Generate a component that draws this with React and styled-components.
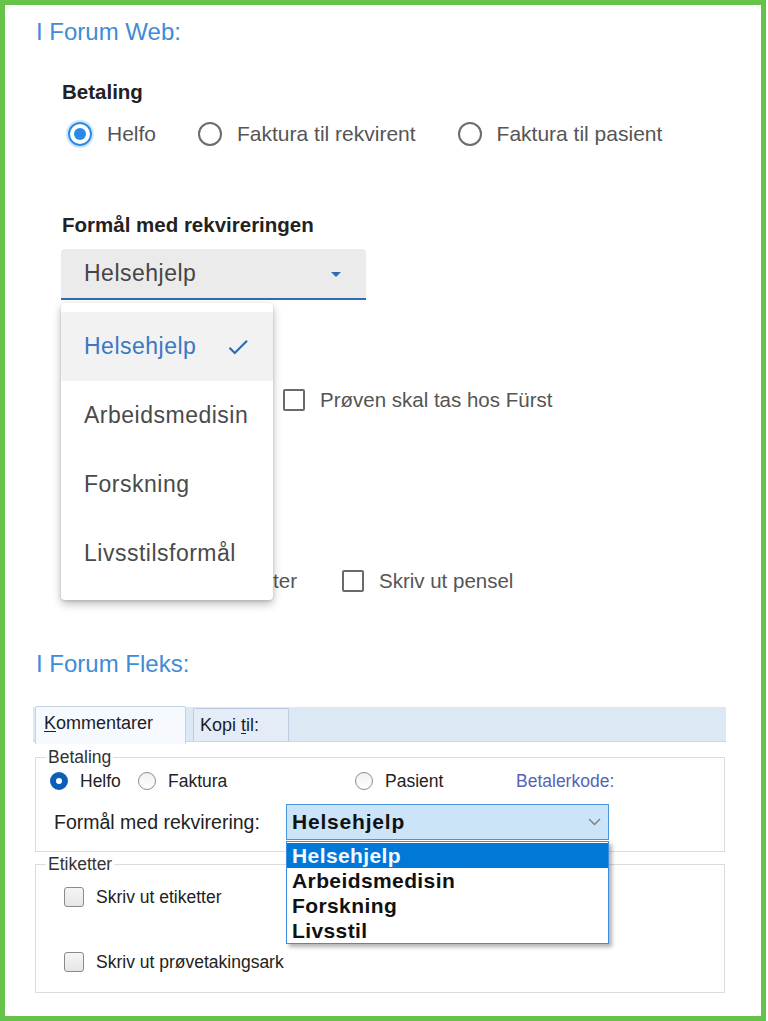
import React from 'react'
import styled, { createGlobalStyle } from 'styled-components'

const GlobalStyle = createGlobalStyle`
  html, body {
    margin: 0;
    padding: 0;
    background: #fff;
  }
  body {
    font-family: "Liberation Sans", Arial, sans-serif;
  }
`

const Frame = styled.div`
  box-sizing: border-box;
  width: 766px;
  height: 1021px;
  border: 5px solid #66c34a;
  background: #fff;
  overflow: hidden;
  padding: 12px 0 0 31px;
`

const Title = styled.h2`
  margin: ${p => p.$top || 0}px 0 0;
  font-size: 24px;
  line-height: 30px;
  font-weight: 400;
  color: #3f8bd8;
`

/* ---------- Forum Web ---------- */

const WebForm = styled.div`
  margin-left: 26px;
`

const FieldLabel = styled.div`
  margin-top: ${p => p.$top}px;
  font-size: 20.5px;
  line-height: 26px;
  font-weight: 700;
  color: #222;
`

const RadioRow = styled.div`
  margin-top: 15px;
  height: 28px;
  padding-left: 6px;
  display: flex;
  align-items: center;
  gap: 42px;
`

const RadioOption = styled.label`
  display: flex;
  align-items: center;
  gap: 15px;
  font-size: 21px;
  color: #555;
`

const RadioDot = styled.span`
  box-sizing: border-box;
  width: 24px;
  height: 24px;
  border-radius: 50%;
  border: 2px solid ${p => (p.$checked ? '#2a8be6' : '#6b6b6b')};
  display: grid;
  place-items: center;
  box-shadow: ${p => (p.$checked ? '0 0 0 2px rgba(42,139,230,0.22)' : 'none')};
  &::after {
    content: '';
    width: 12px;
    height: 12px;
    border-radius: 50%;
    background: ${p => (p.$checked ? '#2a8be6' : 'transparent')};
  }
`

const SelectWrap = styled.div`
  position: relative;
  width: 305px;
  margin: 11px 0 0 -1px;
`

const SelectBox = styled.div`
  box-sizing: border-box;
  height: 51px;
  background: #ebebeb;
  border-radius: 4px 4px 0 0;
  border-bottom: 2px solid #2d6cb4;
  display: flex;
  align-items: center;
  justify-content: space-between;
  padding: 0 18px 0 23px;
  font-size: 23px;
  letter-spacing: 0.5px;
  color: #454545;
`

const Menu = styled.div`
  position: absolute;
  top: calc(100% + 3px);
  left: 0;
  width: 212px;
  background: #fff;
  border-radius: 4px;
  box-shadow: 0 4px 10px rgba(0, 0, 0, 0.26), 0 1px 3px rgba(0, 0, 0, 0.14);
  padding: 9px 0 12px;
  z-index: 5;
`

const MenuItem = styled.div`
  height: 69px;
  display: flex;
  align-items: center;
  justify-content: space-between;
  padding: 0 22px 0 23px;
  font-size: 23px;
  letter-spacing: 0.5px;
  color: ${p => (p.$active ? '#3a78c2' : '#4a4a4a')};
  background: ${p => (p.$active ? '#f2f2f2' : 'transparent')};
`

const CheckRow = styled.div`
  margin-top: ${p => p.$top}px;
  padding-left: ${p => p.$left}px;
  height: 22px;
  display: flex;
  align-items: center;
  gap: 45px;
`

const CheckOption = styled.label`
  display: flex;
  align-items: center;
  gap: 15px;
  font-size: 20.5px;
  color: #555;
`

const CheckSquare = styled.span`
  box-sizing: border-box;
  width: 22px;
  height: 22px;
  border: 2px solid #6a6a6a;
  border-radius: 2px;
`

/* ---------- Forum Fleks ---------- */

const Fleks = styled.div`
  width: 693px;
  margin: 28px 0 0 -3px;
`

const TabStrip = styled.div`
  box-sizing: border-box;
  height: 35px;
  background: #dde8f5;
  border-bottom: 1px solid #c8d5e6;
  display: flex;
  align-items: flex-end;
  gap: 7px;
  padding-left: 2px;
`

const Tab = styled.div`
  box-sizing: border-box;
  width: ${p => p.$width}px;
  height: ${p => (p.$active ? 38 : 33)}px;
  margin-bottom: ${p => (p.$active ? -3 : 0)}px;
  position: relative;
  z-index: ${p => (p.$active ? 2 : 1)};
  background: ${p => (p.$active ? '#f6f9fd' : '#e4ecf7')};
  border: 1px solid ${p => (p.$active ? '#c7d3e3' : '#bccbe0')};
  border-bottom: none;
  border-radius: 2px 2px 0 0;
  display: flex;
  align-items: center;
  padding: ${p => (p.$active ? '0 0 4px 8px' : '0 0 0 6px')};
  font-size: 18px;
  color: #1c1c2c;
  u {
    text-decoration-thickness: 1px;
    text-underline-offset: 2px;
  }
`

const Panel = styled.div`
  padding: 0 1px 0 2px;
`

const Group = styled.fieldset`
  margin: ${p => p.$top}px 0 0;
  padding: 0;
  border: 1px solid #dcdcdc;
  min-width: 0;
`

const Legend = styled.legend`
  margin-left: 10px;
  padding: 0 2px;
  font-size: 17.5px;
  line-height: 20px;
  color: #333;
`

const GroupBody = styled.div`
  padding: ${p => p.$pad};
`

const WinRadioRow = styled.div`
  height: 22px;
  display: flex;
  align-items: center;
`

const WinRadioOption = styled.label`
  width: ${p => p.$width}px;
  display: flex;
  align-items: center;
  gap: 12px;
  font-size: 17.5px;
  color: #222;
`

const WinRadio = styled.span`
  box-sizing: border-box;
  width: 18px;
  height: 18px;
  border-radius: 50%;
  border: ${p => (p.$checked ? '6px solid #0b5fb8' : '1.5px solid #8d8d8d')};
  background: ${p => (p.$checked ? '#fff' : 'linear-gradient(#f1f1f1, #fff)')};
`

const CodeLabel = styled.span`
  font-size: 17.5px;
  color: #5663b5;
`

const ComboRow = styled.div`
  margin: 12px 0 0 4px;
  display: flex;
  align-items: center;
`

const ComboLabel = styled.span`
  width: 232px;
  font-size: 19.5px;
  color: #222;
`

const ComboWrap = styled.div`
  position: relative;
  width: 323px;
`

const ComboBox = styled.div`
  box-sizing: border-box;
  height: 36px;
  border: 1px solid #4a95dc;
  background: #cce4f7;
  display: flex;
  align-items: center;
  justify-content: space-between;
  padding: 0 7px 0 5px;
  font-size: 21px;
  font-weight: 700;
  letter-spacing: 0.8px;
  color: #111;
`

const DropList = styled.div`
  box-sizing: border-box;
  position: absolute;
  top: calc(100% + 1px);
  left: 0;
  width: 323px;
  height: 103px;
  padding-top: 1px;
  background: #fff;
  border: 1px solid #3d8ee0;
  box-shadow: 3px 3px 4px rgba(0, 0, 0, 0.3);
  z-index: 5;
`

const DropItem = styled.div`
  height: 25px;
  line-height: 25px;
  padding-left: 5px;
  font-size: 21px;
  font-weight: 700;
  letter-spacing: 0.4px;
  color: ${p => (p.$selected ? '#f4f8ff' : '#111')};
  background: ${p => (p.$selected ? '#0078d7' : 'transparent')};
`

const WinCheckRow = styled.label`
  margin-top: ${p => p.$top}px;
  height: 20px;
  display: flex;
  align-items: center;
  gap: 12px;
  font-size: 17.5px;
  color: #222;
`

const WinCheck = styled.span`
  box-sizing: border-box;
  width: 20px;
  height: 20px;
  border: 1.5px solid #8a8a8a;
  border-radius: 3px;
  background: linear-gradient(#f5f5f5, #e6e6e6);
`

const CaretIcon = () => (
  <svg width="24" height="24" viewBox="0 0 24 24">
    <path d="M7 10l5 5 5-5z" fill="#2d6cb4" />
  </svg>
)

const CheckIcon = () => (
  <svg width="26" height="26" viewBox="0 0 24 24">
    <path d="M9 16.17L4.83 12l-1.42 1.41L9 19 21 7l-1.41-1.41z" fill="#2d6cb4" />
  </svg>
)

const ChevronIcon = () => (
  <svg width="13" height="8" viewBox="0 0 13 8">
    <path d="M1 1l5.5 5.5L12 1" fill="none" stroke="#7a7a7a" strokeWidth="1.3" />
  </svg>
)

const webOptions = ['Helsehjelp', 'Arbeidsmedisin', 'Forskning', 'Livsstilsformål']
const fleksOptions = ['Helsehjelp', 'Arbeidsmedisin', 'Forskning', 'Livsstil']

export default function App() {
  return (
    <>
      <GlobalStyle />
      <Frame>
        <Title>I Forum Web:</Title>
        <WebForm>
          <FieldLabel $top={32}>Betaling</FieldLabel>
          <RadioRow>
            <RadioOption>
              <RadioDot $checked />
              Helfo
            </RadioOption>
            <RadioOption>
              <RadioDot />
              Faktura til rekvirent
            </RadioOption>
            <RadioOption>
              <RadioDot />
              Faktura til pasient
            </RadioOption>
          </RadioRow>

          <FieldLabel $top={64}>Formål med rekvireringen</FieldLabel>
          <SelectWrap>
            <SelectBox>
              Helsehjelp
              <CaretIcon />
            </SelectBox>
            <Menu>
              {webOptions.map((o, i) => (
                <MenuItem key={o} $active={i === 0}>
                  {o}
                  {i === 0 && <CheckIcon />}
                </MenuItem>
              ))}
            </Menu>
          </SelectWrap>

          <CheckRow $top={89} $left={221}>
            <CheckOption>
              <CheckSquare />
              Prøven skal tas hos Fürst
            </CheckOption>
          </CheckRow>
          <CheckRow $top={159} $left={51}>
            <CheckOption>
              <CheckSquare />
              Skriv ut etiketter
            </CheckOption>
            <CheckOption>
              <CheckSquare />
              Skriv ut pensel
            </CheckOption>
          </CheckRow>
        </WebForm>

        <Title $top={57}>I Forum Fleks:</Title>
        <Fleks>
          <TabStrip>
            <Tab $active $width={151}>
              <span>
                <u>K</u>ommentarer
              </span>
            </Tab>
            <Tab $width={96}>
              <span>
                Kopi <u>t</u>il:
              </span>
            </Tab>
          </TabStrip>
          <Panel>
            <Group $top={5}>
              <Legend>Betaling</Legend>
              <GroupBody $pad="3px 0 11px 14px">
                <WinRadioRow>
                  <WinRadioOption $width={88}>
                    <WinRadio $checked />
                    Helfo
                  </WinRadioOption>
                  <WinRadioOption $width={217}>
                    <WinRadio />
                    Faktura
                  </WinRadioOption>
                  <WinRadioOption $width={161}>
                    <WinRadio />
                    Pasient
                  </WinRadioOption>
                  <CodeLabel>Betalerkode:</CodeLabel>
                </WinRadioRow>
                <ComboRow>
                  <ComboLabel>Formål med rekvirering:</ComboLabel>
                  <ComboWrap>
                    <ComboBox>
                      Helsehjelp
                      <ChevronIcon />
                    </ComboBox>
                    <DropList>
                      {fleksOptions.map((o, i) => (
                        <DropItem key={o} $selected={i === 0}>
                          {o}
                        </DropItem>
                      ))}
                    </DropList>
                  </ComboWrap>
                </ComboRow>
              </GroupBody>
            </Group>
            <Group $top={2}>
              <Legend>Etiketter</Legend>
              <GroupBody $pad="13px 0 20px 28px">
                <WinCheckRow $top={0}>
                  <WinCheck />
                  Skriv ut etiketter
                </WinCheckRow>
                <WinCheckRow $top={45}>
                  <WinCheck />
                  Skriv ut prøvetakingsark
                </WinCheckRow>
              </GroupBody>
            </Group>
          </Panel>
        </Fleks>
      </Frame>
    </>
  )
}
